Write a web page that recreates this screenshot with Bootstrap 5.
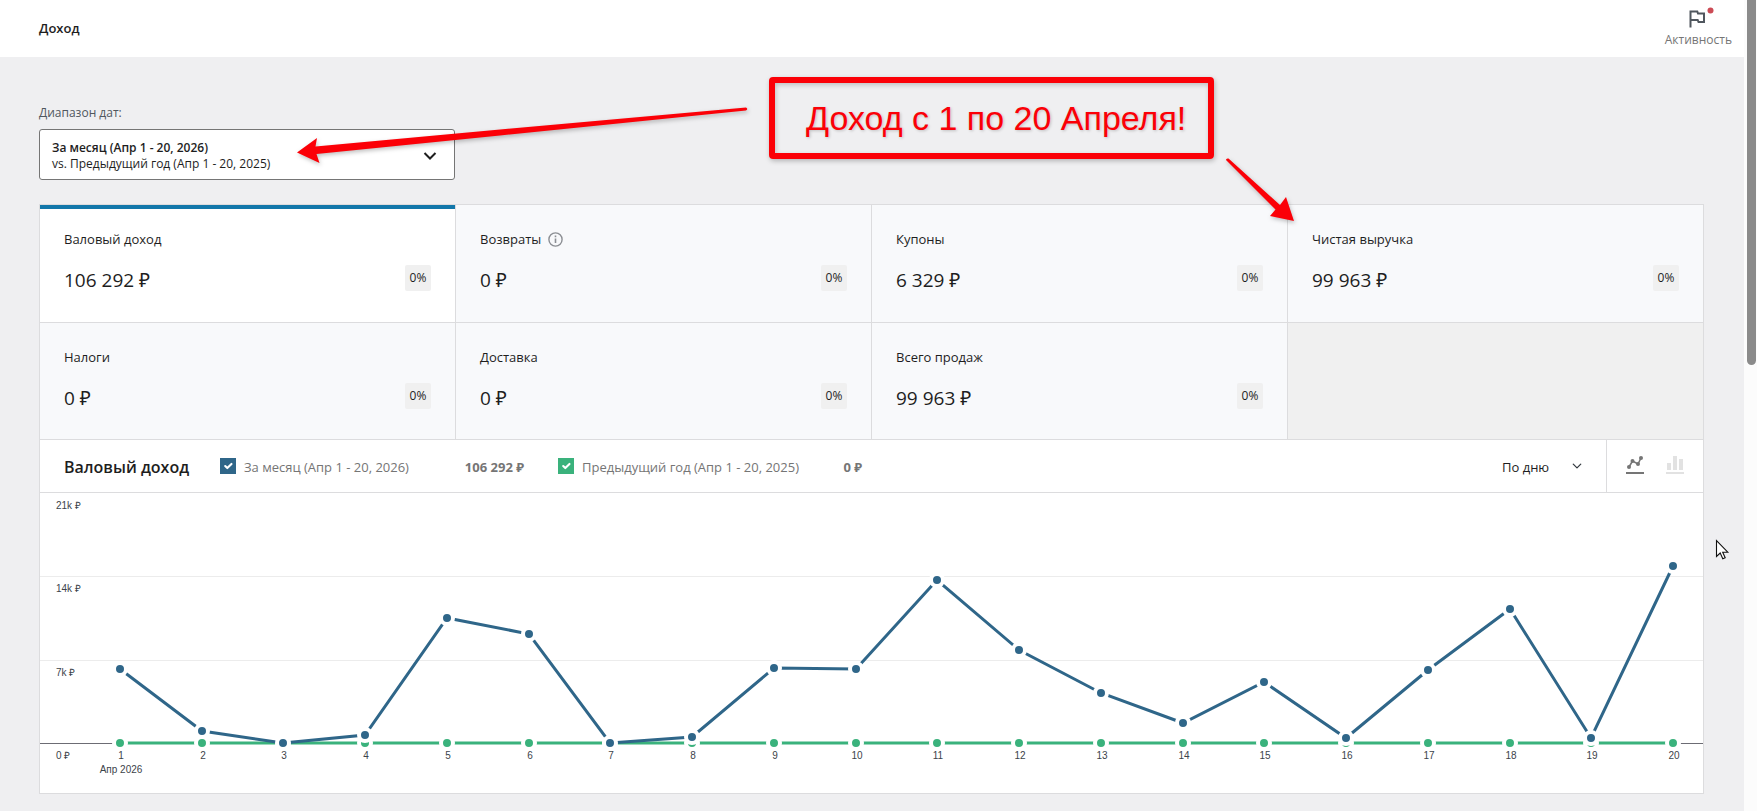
<!DOCTYPE html>
<html lang="ru">
<head>
<meta charset="utf-8">
<meta name="viewport" content="width=device-width, initial-scale=1">
<title>Доход</title>
<link href="https://cdn.jsdelivr.net/npm/bootstrap@5.3.0/dist/css/bootstrap.min.css" rel="stylesheet">
<style>
  :root { --line: #dcdcde; --ink: #1e1e1e; --muted: #757575; --now: #2f6689; --prev: #3ab27c; --mark-red: #fb0007; }
  body { background: #efeff1; color: var(--ink); font-family: "Open Sans", "Noto Sans", sans-serif; font-size: 13px; line-height: 16px; }
  .page-head { background: #fff; min-height: 57px; padding: 0 12px 2px 39px; }
  .page-head h1 { font-size: 13px; line-height: 16px; font-weight: 600; }
  .activity { font-size: 12px; line-height: 16px; color: var(--muted); background: none; border: 0; padding: 0; }
  .activity svg { overflow: visible; }
  .page-body { padding: 48px 40px 17px 39px; }
  .range-label { color: #50575e; font-size: 12px; line-height: 16px; margin-bottom: 8px; }
  .range-btn { width: 25%; min-height: 51px; background: #fff; border: 1px solid #757575; border-radius: 3px; padding: 2px 17px 0 12px; font-size: 12px; line-height: 16px; margin-bottom: 24px; color: var(--ink); }
  .panel { border-left: 1px solid var(--line); background: #fff; }
  .tiles { border-top: 1px solid var(--line); }
  .tile { min-height: 117px; padding: 24px 24px 0; background: #f8f9fb; border: 0 solid var(--line); border-width: 0 1px 1px 0; color: var(--ink); text-decoration: none; }
  .tile.current { min-height: 118px; background: #fff; box-shadow: inset 0 4px 0 #1277aa; }
  .tile.blank { background: #f0f0f0; }
  .tile-name { line-height: 20px; margin-bottom: 16px; }
  .tile-name svg { margin-left: 7px; }
  .tile-sum { font-size: 19px; line-height: 30px; }
  .delta { font-size: 12px; line-height: 26px; width: 26px; height: 26px; background: #f0f0f0; border-radius: 2px; text-align: center; }
  .chart-head { min-height: 53px; border: 0 solid var(--line); border-width: 0 1px 1px 0; }
  .chart-head h2 { font-size: 16px; line-height: 20px; font-weight: 600; width: 132px; }
  .chart-head h2, .series span, .series b { padding-top: 2px; }
  .series-list { gap: 34px; }
  .series { width: 304px; color: var(--muted); white-space: nowrap; }
  .series .form-check-input { width: 16px; height: 16px; border: 0; border-radius: 0; margin: 0 8px 0 0; flex: none; background-size: 14px; }
  .series .form-check-input:checked { background-color: var(--now); }
  .series.before .form-check-input:checked { background-color: var(--prev); }
  .interval { width: 80px; border: 0; padding: 2px 24px 0 0; font-size: 13px; line-height: 20px; color: var(--ink); background-color: transparent; background-position: right 0 center; background-size: 10px; }
  .kinds { border-left: 1px solid var(--line); padding: 0 17px; gap: 18px; }
  .kinds button { background: none; border: 0; padding: 0; width: 22px; height: 20px; display: flex; justify-content: center; }
  .chart-box { border: 0 solid var(--line); border-width: 0 1px 1px 0; }
  .chart-box svg { display: block; width: 100%; height: auto; }
  .chart-box text { font: 10px "Liberation Sans", Arial, sans-serif; fill: #3c434a; }
  .rail { width: 13px; background: #fcfcfc; padding-left: 3px; }
  .rail div { width: 9px; height: 45vh; background: #8b8b8b; border-radius: 0 0 5px 5px; }
  .callout { left: 769px; top: 77px; padding: 17px 22px 16px 31px; border: 6px solid var(--mark-red); border-radius: 4px; color: var(--mark-red); font: 34px/37px "Liberation Sans", Arial, sans-serif; box-shadow: 1px 2px 5px rgba(0,0,0,.25), inset 1px 2px 5px rgba(0,0,0,.2); text-shadow: 1px 1px 3px rgba(0,0,0,.2); white-space: nowrap; }
  .pointers { left: 0; top: 0; pointer-events: none; filter: drop-shadow(1px 2px 2px rgba(0,0,0,.25)); }
  .cursor { left: 1715px; top: 539px; pointer-events: none; }
</style>
</head>
<body>
<div class="d-flex min-vh-100 position-relative">
  <div class="flex-grow-1">
    <header class="page-head d-flex align-items-center justify-content-between">
      <h1 class="m-0">Доход</h1>
      <button type="button" class="activity d-flex flex-column align-items-center">
        <svg width="26" height="24" viewBox="0 0 26 24" aria-hidden="true">
          <path d="M5.500 19.500V3.500H12.300L13 5.500H19V14H13.500L12.700 12H5.500" fill="none" stroke="#50575e" stroke-width="2"/>
          <circle cx="25.500" cy="2.500" r="3" fill="#cc4b55"/>
        </svg>
        <span>Активность</span>
      </button>
    </header>
    <main class="page-body">
      <div class="range-label" id="range-label">Диапазон дат:</div>
      <button type="button" class="range-btn d-flex align-items-center justify-content-between text-start" aria-labelledby="range-label range-value">
        <span id="range-value"><span class="fw-semibold d-block">За месяц (Апр 1 - 20, 2026)</span><span class="d-block">vs. Предыдущий год (Апр 1 - 20, 2025)</span></span>
        <svg width="14" height="10" viewBox="0 0 14 10" aria-hidden="true"><path d="M1.500 2L7 7.500L12.500 2" fill="none" stroke="#1e1e1e" stroke-width="2"/></svg>
      </button>

      <section class="panel">
        <div class="tiles row g-0">
          <a href="#" class="tile current col-3"><div class="tile-name">Валовый доход</div><div class="d-flex justify-content-between"><span class="tile-sum">106 292 ₽</span><span class="delta">0%</span></div></a>
          <a href="#" class="tile col-3"><div class="tile-name d-flex align-items-center">Возвраты<svg width="15" height="15" viewBox="0 0 15 15" aria-hidden="true"><circle cx="7.500" cy="7.500" r="6.600" fill="none" stroke="#8c8f94" stroke-width="1.400"/><path d="M7.500 6.500V11M7.500 3.500V5.200" stroke="#8c8f94" stroke-width="1.600"/></svg></div><div class="d-flex justify-content-between"><span class="tile-sum">0 ₽</span><span class="delta">0%</span></div></a>
          <a href="#" class="tile col-3"><div class="tile-name">Купоны</div><div class="d-flex justify-content-between"><span class="tile-sum">6 329 ₽</span><span class="delta">0%</span></div></a>
          <a href="#" class="tile col-3"><div class="tile-name">Чистая выручка</div><div class="d-flex justify-content-between"><span class="tile-sum">99 963 ₽</span><span class="delta">0%</span></div></a>
          <a href="#" class="tile col-3"><div class="tile-name">Налоги</div><div class="d-flex justify-content-between"><span class="tile-sum">0 ₽</span><span class="delta">0%</span></div></a>
          <a href="#" class="tile col-3"><div class="tile-name">Доставка</div><div class="d-flex justify-content-between"><span class="tile-sum">0 ₽</span><span class="delta">0%</span></div></a>
          <a href="#" class="tile col-3"><div class="tile-name">Всего продаж</div><div class="d-flex justify-content-between"><span class="tile-sum">99 963 ₽</span><span class="delta">0%</span></div></a>
          <div class="tile blank col-3"></div>
        </div>

        <div class="chart-head d-flex">
          <div class="d-flex align-items-center flex-grow-1 ps-4">
            <h2 class="m-0 me-4 text-nowrap">Валовый доход</h2>
            <div class="d-flex series-list">
              <label class="series d-flex align-items-center"><input type="checkbox" class="form-check-input" checked><span>За месяц (Апр 1 - 20, 2026)</span><b class="ms-auto">106 292 ₽</b></label>
              <label class="series before d-flex align-items-center"><input type="checkbox" class="form-check-input" checked><span>Предыдущий год (Апр 1 - 20, 2025)</span><b class="ms-auto">0 ₽</b></label>
            </div>
          </div>
          <div class="d-flex align-items-center pe-4">
            <select class="form-select interval" aria-label="Интервал"><option>По дню</option><option>По неделе</option></select>
          </div>
          <div class="kinds d-flex align-items-center">
            <button type="button" aria-label="Линейный график"><svg width="18" height="18" viewBox="0 0 18 18"><path d="M3 11L6.500 5L12 8L15 2" fill="none" stroke="#757575" stroke-width="1.600"/><g fill="#757575"><circle cx="3" cy="11" r="2"/><circle cx="6.500" cy="5" r="2"/><circle cx="12" cy="8" r="2"/><circle cx="15" cy="2" r="2"/><path d="M0 16H18V18H0Z"/></g></svg></button>
            <button type="button" aria-label="Столбчатый график"><svg width="18" height="18" viewBox="0 0 18 18" fill="#e2e2e2"><path d="M1 7H5V14H1ZM7 0H11V14H7ZM13 3H17V14H13ZM0 16H18V18H0Z"/></svg></button>
          </div>
        </div>

        <div class="chart-box"><svg id="chart" viewBox="0 0 1663 300" role="img" aria-label="Валовый доход по дням"></svg></div>
      </section>
    </main>
  </div>
  <div class="rail" aria-hidden="true"><div></div></div>

  <svg class="pointers position-absolute" width="1320" height="240" viewBox="0 0 1320 240" aria-hidden="true" fill="#fb0007">
    <path d="M297 152.500L317 138L315.500 146.500L500 129.500L746 107.500Q748.500 109 746 110.500L500 135.500L316.500 154L319.500 163Z"/>
    <path d="M1226 160Q1226 158 1228.500 158.500L1280 205L1286 197L1294 221L1270 216L1275.500 209.500Z"/>
  </svg>
  <div class="callout position-absolute">Доход с 1 по 20 Апреля!</div>
  <svg class="cursor position-absolute" width="15" height="22" viewBox="0 0 15 22" aria-hidden="true"><path d="M1.500 1.500V17.500L5.200 14L7.800 19.800L10.200 18.700L7.700 13.200H12.800Z" fill="#fff" stroke="#111" stroke-width="1.100"/></svg>
</div>

<script src="https://cdn.jsdelivr.net/npm/bootstrap@5.3.0/dist/js/bootstrap.bundle.min.js"></script>
<script>
  // Heights of the daily points, measured down from the top grid line
  const days = [176, 238, 250, 242, 125, 141, 250, 244, 175, 176, 87, 157, 200, 230, 189, 245, 177, 116, 245, 73];
  const base = 250, x = i => Math.round(80 + i * 1553 / 19);
  let out = '';
  [['14k ₽', 83], ['7k ₽', 167]].forEach(([t, y]) => out += `<path d="M0 ${y}.5H1663" stroke="#ececec"/>`);
  out += `<path d="M0 ${base}.5H1663" stroke="#6c6c74"/>`;
  [['21k ₽', 0], ['14k ₽', 83], ['7k ₽', 167], ['0 ₽', base]].forEach(([t, y]) => out += `<text x="16" y="${y + 16}">${t}</text>`);
  const series = (ys, color) => {
    out += `<polyline fill="none" stroke="${color}" stroke-width="3" points="${ys.map((y, i) => x(i) + ',' + y).join(' ')}"/>`;
    ys.forEach((y, i) => out += `<circle cx="${x(i)}" cy="${y}" r="6" fill="${color}" stroke="#fff" stroke-width="4"/>`);
  };
  series(days.map(() => base), '#3ab27c');
  series(days, '#2f6689');
  days.forEach((y, i) => out += `<text x="${x(i) + 1}" y="${base + 16}" text-anchor="middle">${i + 1}</text>`);
  out += `<text x="81" y="${base + 30}" text-anchor="middle">Апр 2026</text>`;
  document.getElementById('chart').innerHTML = out;
</script>
</body>
</html>
